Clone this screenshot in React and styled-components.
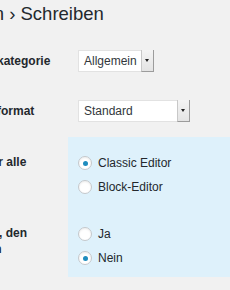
import React from "react";
import styled, { createGlobalStyle } from "styled-components";

const GlobalStyle = createGlobalStyle`
  html, body {
    margin: 0;
    padding: 0;
    background: #f1f1f1;
    overflow: hidden;
  }
  body {
    font-family: "Liberation Sans", Arial, sans-serif;
    color: #23282d;
  }
`;

// the settings page is wider than the window; its left part is cut off
const Page = styled.div`
  margin-left: -107px;
  width: calc(100% + 107px);
`;

const Title = styled.h1`
  margin: 0 0 10px;
  padding-top: 2px;
  font-size: 18.5px;
  font-weight: 400;
  line-height: 24px;
  color: #23282d;
  white-space: nowrap;
`;

const Row = styled.div`
  display: grid;
  grid-template-columns: 175px 1fr;
`;

const Label = styled.div`
  padding-top: 17px;
  padding-right: 10px;
  font-size: 12px;
  font-weight: 700;
  line-height: 16px;
  color: #23282d;
`;

const Field = styled.div`
  padding: ${(p) => p.$top}px 10px ${(p) => p.$bottom}px;
  background: ${(p) => (p.$highlight ? "#def1fb" : "transparent")};
`;

const Select = styled.div`
  display: flex;
  width: ${(p) => p.$width}px;
  height: 22px;
  box-sizing: border-box;
  background: #fff;
  border: 1px solid #e2e2e2;
  font-size: 12px;
  color: #32373c;
`;

const SelectValue = styled.span`
  flex: 1;
  padding-left: 5px;
  line-height: 20px;
`;

const SelectArrow = styled.span`
  position: relative;
  width: 11px;
  background: linear-gradient(#f4f4f4, #e4e4e4);
  border-left: 1px solid #c8c8c8;
  border-right: 1px solid #9c9c9c;
  border-bottom: 1px solid #9c9c9c;
  margin: -1px -1px -1px 0;

  &::after {
    content: "";
    position: absolute;
    left: 3px;
    top: 9px;
    border-left: 2.5px solid transparent;
    border-right: 2.5px solid transparent;
    border-top: 3px solid #222;
  }
`;

const Option = styled.label`
  display: flex;
  align-items: center;
  gap: 6px;
  height: 24px;
  font-size: 12px;
  color: #23282d;
`;

const Radio = styled.input.attrs({ type: "radio" })`
  appearance: none;
  margin: 0;
  width: 14px;
  height: 14px;
  border-radius: 50%;
  border: 1px solid #c4c8cc;
  background: #fff;
  box-shadow: inset 0 1px 2px rgba(0, 0, 0, 0.08);
  display: grid;
  place-items: center;
  box-sizing: border-box;

  &:checked::before {
    content: "";
    width: 5px;
    height: 5px;
    border-radius: 50%;
    background: #1e8cbe;
  }
`;

const SelectBox = ({ value, width }) => (
  <Select $width={width}>
    <SelectValue>{value}</SelectValue>
    <SelectArrow />
  </Select>
);

export default function App() {
  return (
    <>
      <GlobalStyle />
      <Page>
        <Title>Einstellungen › Schreiben</Title>
        <Row>
          <Label>Standard-Beitragskategorie</Label>
          <Field $top={14} $bottom={14}>
            <SelectBox value="Allgemein" width={76} />
          </Field>
        </Row>
        <Row>
          <Label>Standard-Beitragsformat</Label>
          <Field $top={14} $bottom={15}>
            <SelectBox value="Standard" width={112} />
          </Field>
        </Row>
        <Row>
          <Label>Standard-Editor für alle Benutzer</Label>
          <Field $highlight $top={14} $bottom={9}>
            <Option>
              <Radio name="editor" defaultChecked />
              Classic Editor
            </Option>
            <Option>
              <Radio name="editor" />
              Block-Editor
            </Option>
          </Field>
        </Row>
        <Row>
          <Label>Erlaube Benutzern, den Editor zu wechseln</Label>
          <Field $highlight $top={14} $bottom={7}>
            <Option>
              <Radio name="switch" />
              Ja
            </Option>
            <Option>
              <Radio name="switch" defaultChecked />
              Nein
            </Option>
          </Field>
        </Row>
      </Page>
    </>
  );
}
